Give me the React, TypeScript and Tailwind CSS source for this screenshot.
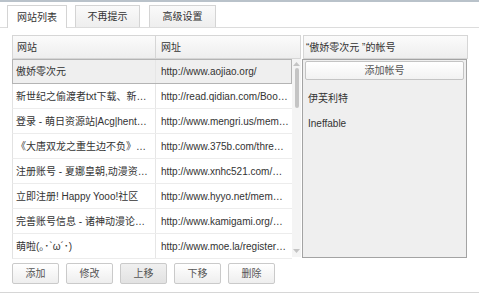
import React from 'react';

const rows = [
  ['傲娇零次元', 'http://www.aojiao.org/'],
  ['新世纪之偷渡者txt下载、新…', 'http://read.qidian.com/Boo…'],
  ['登录 - 萌日资源站|Acg|hent…', 'http://www.mengri.us/mem…'],
  ['《大唐双龙之重生边不负》…', 'http://www.375b.com/thre…'],
  ['注册账号 - 夏娜皇朝,动漫资…', 'http://www.xnhc521.com/…'],
  ['立即注册! Happy Yooo!社区', 'http://www.hyyo.net/mem…'],
  ['完善账号信息 - 诸神动漫论…', 'http://www.kamigami.org/…'],
  ['萌啦(｡･`ω´･)', 'http://www.moe.la/register…'],
];

const font = { fontFamily: '"Liberation Sans", "Noto Sans CJK SC", sans-serif' };

export default function App() {
  return (
    <div className="w-[479px] h-[295px] bg-white border-t-2 border-[#b9c2ca] text-[10px] text-[#333] overflow-hidden" style={font}>
      {/* tabs */}
      <div className="flex items-end gap-[8px] pl-[7px] h-[26px] border-b border-[#dcdcdc]">
        <div className="w-[60px] h-[23px] -mb-px bg-white border border-b-0 border-[#d4d4d4] flex items-center justify-center">网站列表</div>
        <div className="w-[65px] h-[22px] bg-gradient-to-b from-[#fafafa] to-[#eeeeee] border border-b-0 border-[#d4d4d4] flex items-center justify-center">不再提示</div>
        <div className="w-[67px] h-[22px] ml-px bg-gradient-to-b from-[#fafafa] to-[#eeeeee] border border-b-0 border-[#d4d4d4] flex items-center justify-center">高级设置</div>
      </div>

      <div className="flex pl-[12px] pt-[7px]">
        {/* table */}
        <div className="w-[289px] flex flex-col">
          <div className="flex h-[24px] bg-gradient-to-b from-[#fbfbfb] to-[#eeeeee] border border-[#d6d6d6]">
            <div className="w-[143px] pl-[4px] flex items-center border-r border-[#d6d6d6]">网站</div>
            <div className="flex-1 pl-[5px] flex items-center">网址</div>
          </div>
          <div className="flex">
            <div className="w-[280px] flex flex-col">
              {rows.map(([name, url], i) => (
                <div
                  key={i}
                  className={
                    i === 0
                      ? 'flex h-[25px] bg-[#efefef] border border-[#b4b4b4]'
                      : 'flex h-[25px] border-b border-[#ececec] border-l border-l-[#e2e2e2]'
                  }
                >
                  <div className="w-[143px] pl-[3px] flex items-center border-r border-[#e6e6e6] whitespace-nowrap overflow-hidden">{name}</div>
                  <div className="flex-1 pl-[5px] flex items-center whitespace-nowrap overflow-hidden">{url}</div>
                </div>
              ))}
            </div>
            {/* scrollbar */}
            <div className="w-[9px] h-[198px] bg-[#f4f4f4] flex flex-col items-center pt-[3px]">
              <svg width="7" height="4" viewBox="0 0 7 4"><path d="M0 4 L3.5 0 L7 4 Z" fill="#c4c4c4" /></svg>
              <div className="w-[4px] h-[40px] mt-[2px] rounded-full bg-[#c4c4c4]"></div>
              <div className="flex-1"></div>
              <svg width="7" height="4" viewBox="0 0 7 4" className="mb-[4px]"><path d="M0 0 L3.5 4 L7 0 Z" fill="#c4c4c4" /></svg>
            </div>
          </div>
        </div>

        {/* right panel */}
        <div className="w-[166px] ml-px flex flex-col">
          <div className="h-[24px] ml-px bg-gradient-to-b from-[#fbfbfb] to-[#eeeeee] border border-[#d6d6d6] flex items-center pl-[2px]">“傲娇零次元 ”的帐号</div>
          <div className="h-[199px] w-[165px] bg-[#efefef] border border-[#a3a3a3] flex flex-col">
            <div className="mx-[2px] mt-[1px] h-[19px] bg-gradient-to-b from-white to-[#f2f2f2] border border-[#c4c4c4] rounded-[2px] flex items-center justify-center text-[#555]">添加帐号</div>
            <div className="pl-[5px] mt-[8px] h-[20px] flex items-center">伊芙利特</div>
            <div className="pl-[5px] mt-[5px] h-[20px] flex items-center">Ineffable</div>
          </div>
        </div>
      </div>

      {/* buttons */}
      <div className="flex gap-[7px] pl-[12px] pt-[4px] h-[34px] border-b border-[#d6d6d6]">
        {['添加', '修改', '上移', '下移', '删除'].map((b, i) => (
          <div
            key={b}
            className={
              'w-[47px] h-[21px] border border-[#cacaca] rounded-[2px] flex items-center justify-center text-[#555] ' +
              (i === 2 ? 'bg-gradient-to-b from-[#f0f0f0] to-[#e2e2e2]' : 'bg-gradient-to-b from-white to-[#eeeeee]')
            }
          >
            {b}
          </div>
        ))}
      </div>
    </div>
  );
}
